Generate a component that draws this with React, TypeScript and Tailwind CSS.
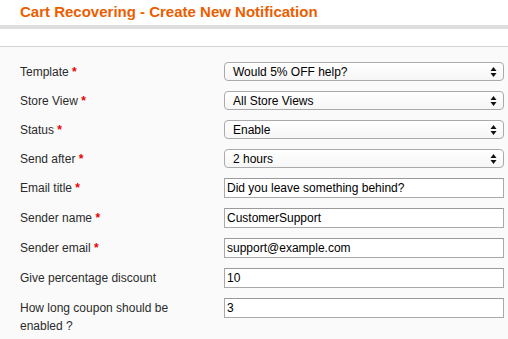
import React from "react";

const font = { fontFamily: '"Liberation Sans", Arial, Helvetica, sans-serif' };

function Req() {
  return <span className="text-[#eb0000] font-bold"> *</span>;
}

function Arrows() {
  return (
    <svg width="7" height="11" viewBox="0 0 7 11" className="absolute right-[6px] top-1/2 -translate-y-1/2 pointer-events-none">
      <path d="M3.5 0.5 L6.5 4.5 L0.5 4.5 Z" fill="#111" />
      <path d="M3.5 10.5 L6.5 6.5 L0.5 6.5 Z" fill="#111" />
    </svg>
  );
}

function SelectBox({ value }: { value: string }) {
  return (
    <div className="relative w-[280px] h-[19px] rounded-[4px] border border-[#aaaaaa] bg-gradient-to-b from-white to-[#f6f6f6] flex items-center pl-[8px] text-[12px] text-black leading-none">
      <span>{value}</span>
      <Arrows />
    </div>
  );
}

function TextBox({ value }: { value: string }) {
  return (
    <div className="w-[280px] h-[20px] border border-[#a9a9a9] border-t-[#9a9a9a] bg-white flex items-center pl-[2px] text-[12px] text-black leading-none">
      <span>{value}</span>
    </div>
  );
}

type Row = { label: string; req?: boolean; kind: "select" | "text"; value: string };

const rows: Row[] = [
  { label: "Template", req: true, kind: "select", value: "Would 5% OFF help?" },
  { label: "Store View", req: true, kind: "select", value: "All Store Views" },
  { label: "Status", req: true, kind: "select", value: "Enable" },
  { label: "Send after", req: true, kind: "select", value: "2 hours" },
  { label: "Email title", req: true, kind: "text", value: "Did you leave something behind?" },
  { label: "Sender name", req: true, kind: "text", value: "CustomerSupport" },
  { label: "Sender email", req: true, kind: "text", value: "support@example.com" },
  { label: "Give percentage discount", kind: "text", value: "10" },
  { label: "How long coupon should be enabled ?", kind: "text", value: "3" },
];

export default function App() {
  return (
    <div style={font} className="w-[508px] h-[339px] overflow-hidden bg-[#fafafa] flex flex-col">
      <div className="bg-white h-[25px] pl-[20px] pt-[3px]">
        <h1 className="text-[15px] leading-[18px] font-bold text-[#eb5e00]">Cart Recovering - Create New Notification</h1>
      </div>
      <div className="h-[4px] bg-[#dedede]" />
      <div className="h-[17px] bg-white" />
      <div className="h-[1px] bg-[#d3d3d3]" />
      <div className="pt-[15px] pl-[20px] flex flex-col">
        {rows.map((r) => (
          <div key={r.label} className={`flex items-start ${r.kind === "select" ? "h-[29px]" : "h-[30px]"}`}>
            <div className="w-[204px] pr-[30px] text-[12px] leading-[18px] text-[#2b2b2b] pt-[1px]">
              {r.label}
              {r.req && <Req />}
            </div>
            {r.kind === "select" ? <SelectBox value={r.value} /> : <TextBox value={r.value} />}
          </div>
        ))}
      </div>
    </div>
  );
}
